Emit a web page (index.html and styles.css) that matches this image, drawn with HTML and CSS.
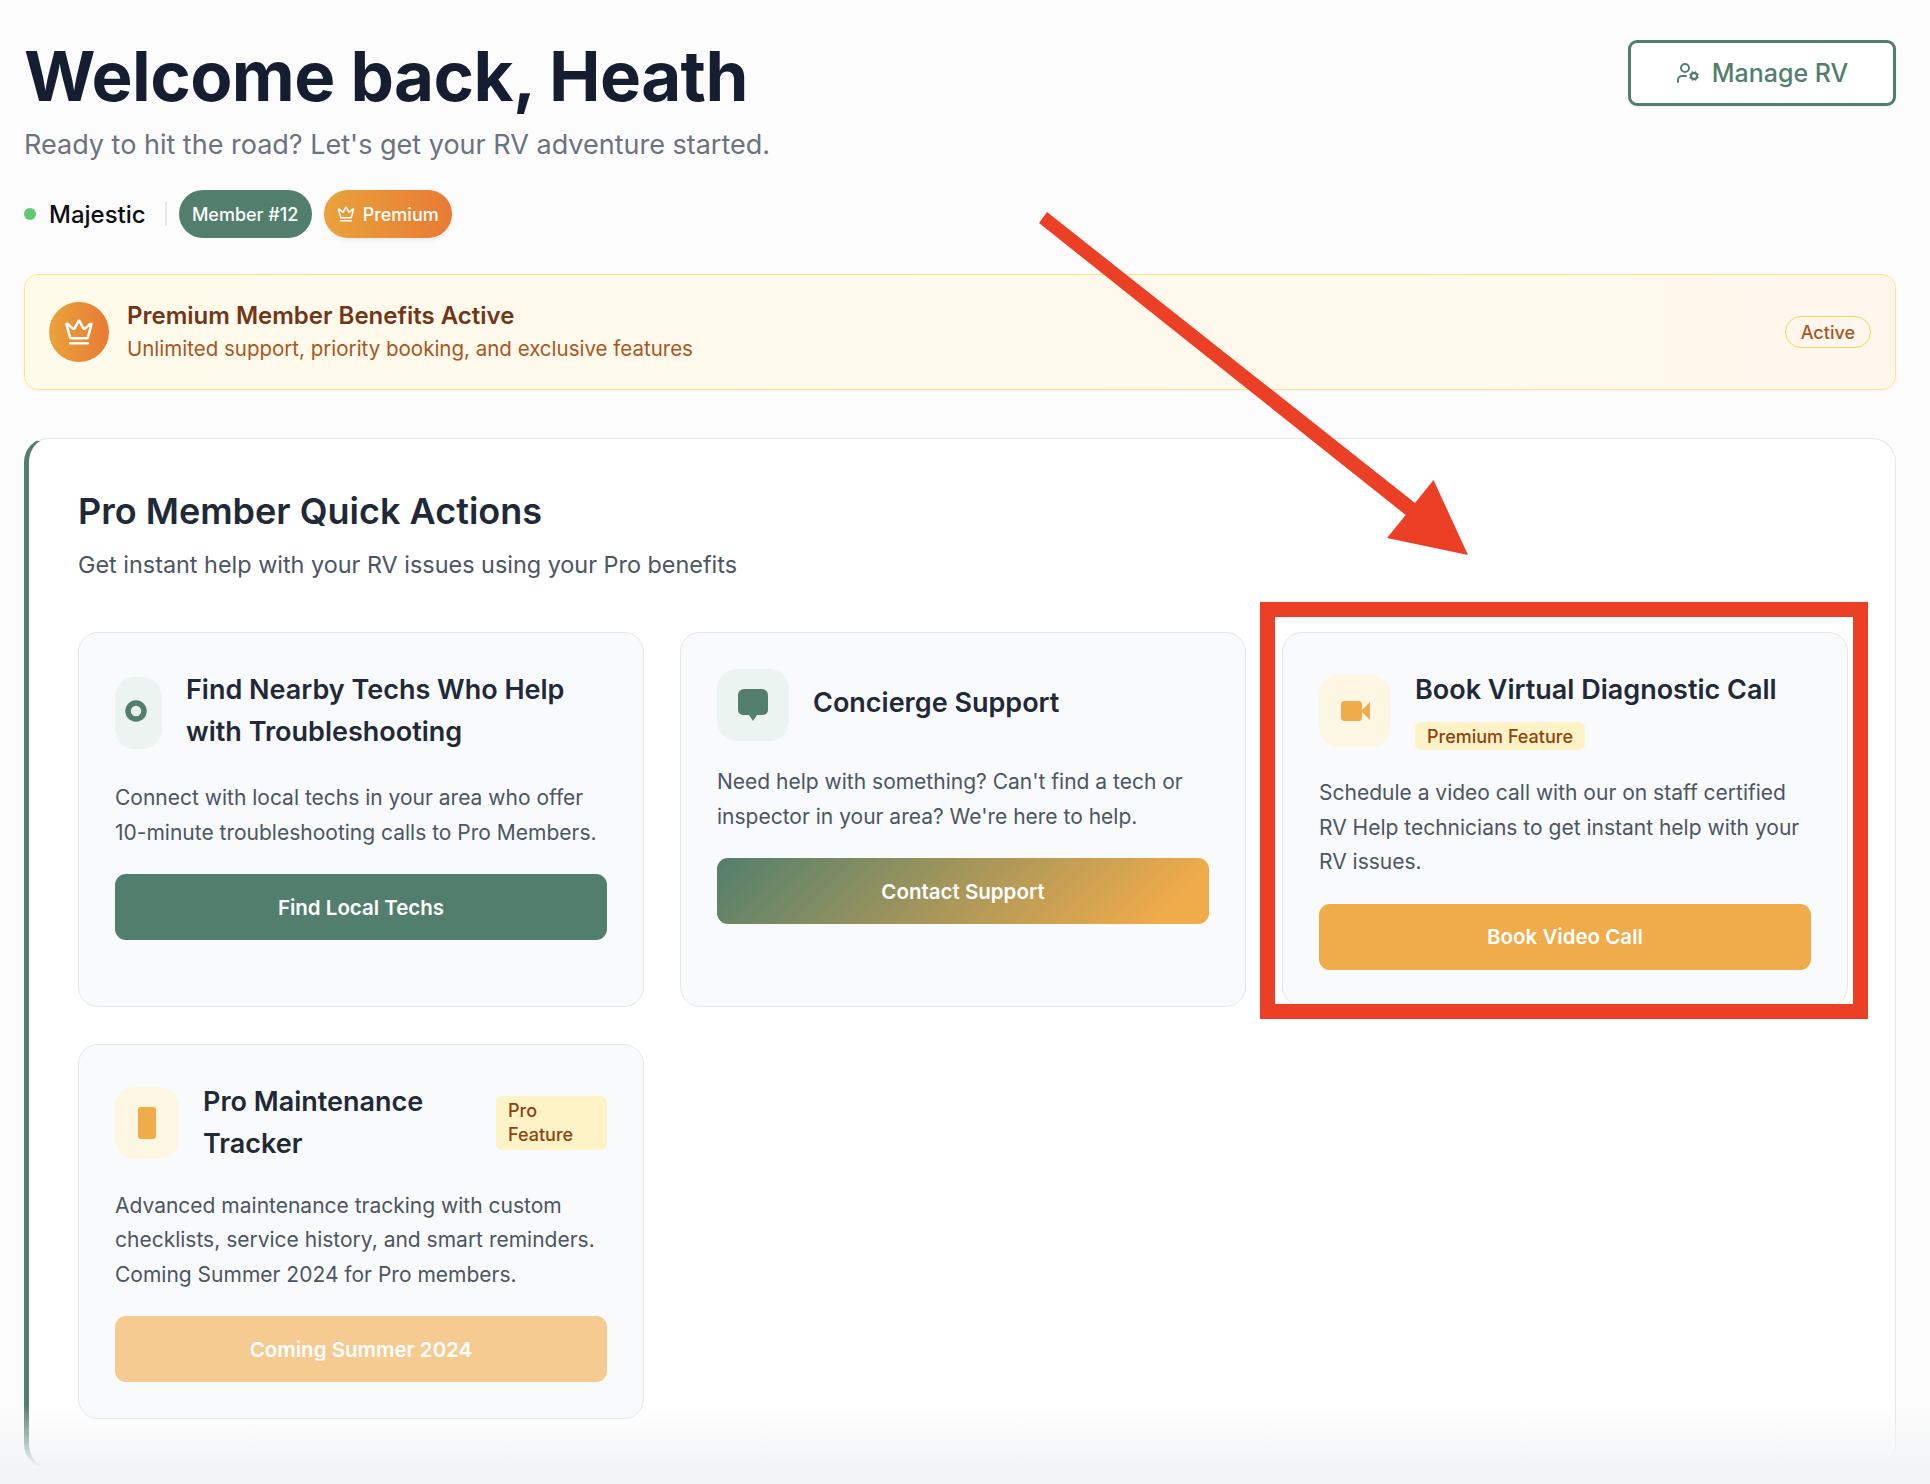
FILE: index.html
```html
<!DOCTYPE html>
<html lang="en">
<head>
<meta charset="utf-8">
<title>Dashboard</title>
<link rel="stylesheet" href="styles.css">
</head>
<body>
<main class="page">
  <header class="header">
    <div class="header-text">
      <h1 class="title">Welcome back, Heath</h1>
      <p class="subtitle">Ready to hit the road? Let's get your RV adventure started.</p>
    </div>
    <a class="manage-btn">
      <svg class="manage-icon" viewBox="0 0 24 24" fill="none" stroke="currentColor" stroke-width="2" stroke-linecap="round" stroke-linejoin="round"><circle cx="18" cy="15" r="3"/><circle cx="9" cy="7" r="4"/><path d="M10 15H6a4 4 0 0 0-4 4v2"/><path d="m21.7 16.4-.9-.3"/><path d="m15.2 13.9-.9-.3"/><path d="m16.6 18.7.3-.9"/><path d="m19.1 12.2.3-.9"/><path d="m19.6 18.7-.4-1"/><path d="m16.8 12.3-.4-1"/><path d="m14.3 16.6 1-.4"/><path d="m20.7 13.8 1-.4"/></svg>
      Manage RV
    </a>
  </header>

  <div class="status-row">
    <span class="dot"></span>
    <span class="rv-name">Majestic</span>
    <span class="divider"></span>
    <span class="pill pill-green">Member #12</span>
    <span class="pill pill-orange">
      <svg class="pill-crown" viewBox="0 0 24 24" fill="none" stroke="currentColor" stroke-width="2" stroke-linecap="round" stroke-linejoin="round"><path d="M11.562 3.266a.5.5 0 0 1 .876 0L15.39 8.87a1 1 0 0 0 1.516.294L21.183 5.5a.5.5 0 0 1 .798.519l-2.834 10.246a1 1 0 0 1-.956.734H5.81a1 1 0 0 1-.957-.734L2.02 6.02a.5.5 0 0 1 .798-.519l4.276 3.664a1 1 0 0 0 1.516-.294z"/><path d="M5 21h14"/></svg>
      Premium
    </span>
  </div>

  <section class="banner">
    <div class="banner-icon">
      <svg class="banner-crown" viewBox="0 0 24 24" fill="none" stroke="currentColor" stroke-width="2" stroke-linecap="round" stroke-linejoin="round"><path d="M11.562 3.266a.5.5 0 0 1 .876 0L15.39 8.87a1 1 0 0 0 1.516.294L21.183 5.5a.5.5 0 0 1 .798.519l-2.834 10.246a1 1 0 0 1-.956.734H5.81a1 1 0 0 1-.957-.734L2.02 6.02a.5.5 0 0 1 .798-.519l4.276 3.664a1 1 0 0 0 1.516-.294z"/><path d="M5 21h14"/></svg>
    </div>
    <div class="banner-text">
      <div class="banner-title">Premium Member Benefits Active</div>
      <div class="banner-sub">Unlimited support, priority booking, and exclusive features</div>
    </div>
    <span class="active-pill">Active</span>
  </section>

  <section class="panel">
    <h2 class="panel-title">Pro Member Quick Actions</h2>
    <p class="panel-sub">Get instant help with your RV issues using your Pro benefits</p>
    <div class="grid">

      <article class="card">
        <div class="card-head">
          <div class="icon icon-green icon-narrow">
            <svg class="ring" viewBox="0 0 22 22" fill="none" stroke="#527f6d" stroke-width="5.5"><circle cx="11" cy="11" r="8"/></svg>
          </div>
          <h3 class="card-title card-title-gap">Find Nearby Techs Who Help with Troubleshooting</h3>
        </div>
        <p class="card-desc">Connect with local techs in your area who offer 10-minute troubleshooting calls to Pro Members.</p>
        <a class="btn btn-green">Find Local Techs</a>
      </article>

      <article class="card">
        <div class="card-head">
          <div class="icon icon-green">
            <svg class="chat" viewBox="0 0 30 32" fill="#527f6d"><path d="M6 0h18a6 6 0 0 1 6 6v15a5 5 0 0 1-5 5h-6l-4 6-4-6H5a5 5 0 0 1-5-5V6a6 6 0 0 1 6-6z"/></svg>
          </div>
          <h3 class="card-title card-title-single">Concierge Support</h3>
        </div>
        <p class="card-desc">Need help with something? Can't find a tech or inspector in your area? We're here to help.</p>
        <a class="btn btn-gradient">Contact Support</a>
      </article>

      <article class="card">
        <div class="card-head card-head-video">
          <div class="icon icon-amber">
            <svg class="video" viewBox="0 0 29 20" fill="#f0ab4a"><rect width="21" height="20" rx="3.5"/><path d="M29 1v18l-8-8v-2z"/></svg>
          </div>
          <div class="title-stack">
            <h3 class="card-title">Book Virtual Diagnostic Call</h3>
            <span class="badge">Premium Feature</span>
          </div>
        </div>
        <p class="card-desc">Schedule a video call with our on staff certified RV Help technicians to get instant help with your RV issues.</p>
        <a class="btn btn-amber">Book Video Call</a>
      </article>

      <article class="card">
        <div class="card-head">
          <div class="icon icon-amber icon-mid">
            <span class="tracker"></span>
          </div>
          <h3 class="card-title card-title-grow">Pro Maintenance Tracker</h3>
          <span class="badge badge-wrap">Pro Feature</span>
        </div>
        <p class="card-desc">Advanced maintenance tracking with custom checklists, service history, and smart reminders. Coming Summer 2024 for Pro members.</p>
        <a class="btn btn-muted">Coming Summer 2024</a>
      </article>

    </div>
  </section>
</main>

<svg class="annotation" viewBox="0 0 1930 1484" fill="none">
  <polygon points="1047,212 1415,503 1433.5,480 1468,555 1387,538 1405.7,515 1039,223" fill="#eb4026"/>
  <rect x="1267.5" y="609.5" width="593" height="402" stroke="#eb4026" stroke-width="15"/>
</svg>
</body>
</html>
```
FILE: styles.css
```css
* { box-sizing: border-box; }
html, body { margin: 0; padding: 0; }
body {
  width: 1930px;
  height: 1484px;
  position: relative;
  overflow: hidden;
  background: #fcfcfc;
  font-family: Inter, "Noto Sans", sans-serif;
}
body::after {
  content: "";
  position: absolute;
  left: 0;
  right: 0;
  bottom: 0;
  height: 80px;
  background: linear-gradient(to bottom, rgba(243,244,246,0), rgba(243,244,246,1) 80%);
  pointer-events: none;
}
.page { padding: 40px 34px 0 24px; }

.header { display: flex; justify-content: space-between; align-items: flex-start; }
.title {
  margin: 0;
  font-size: 69px;
  line-height: 72px;
  font-weight: 700;
  letter-spacing: -0.6px;
  color: #151d30;
}
.subtitle {
  margin: 13px 0 0;
  font-size: 27px;
  line-height: 40px;
  color: #6b7280;
}
.manage-btn {
  width: 268px;
  height: 66px;
  display: flex;
  align-items: center;
  justify-content: center;
  gap: 12px;
  background: #fff;
  border: 3px solid #527f6d;
  border-radius: 9px;
  color: #527f6d;
  font-size: 25px;
  font-weight: 500;
  box-shadow: 0 1px 3px rgba(0,0,0,.06);
}
.manage-icon { width: 24px; height: 24px; }

.status-row { margin-top: 25px; display: flex; align-items: center; height: 48px; }
.dot { width: 12px; height: 12px; border-radius: 50%; background: #5ec96e; }
.rv-name { margin-left: 13px; font-size: 24px; font-weight: 500; color: #0d0d12; }
.divider { width: 2px; height: 24px; margin: 0 12px 0 19px; background: #e5e7eb; }
.pill {
  height: 48px;
  display: inline-flex;
  align-items: center;
  justify-content: center;
  border-radius: 24px;
  font-size: 18px;
  font-weight: 500;
  color: #fff;
}
.pill-green { width: 133px; background: #527f6d; }
.pill-orange {
  width: 128px;
  margin-left: 12px;
  gap: 8px;
  background: linear-gradient(90deg, #e9a33b, #e97a35);
  box-shadow: 0 2px 5px rgba(0,0,0,.08);
}
.pill-crown { width: 18px; height: 18px; }

.banner {
  margin-top: 36px;
  height: 116px;
  display: flex;
  align-items: center;
  padding: 0 24px;
  border: 1.5px solid #fde68a;
  border-radius: 14px;
  background: linear-gradient(90deg, #fffbeb, #fff7ed);
  box-shadow: 0 1px 3px rgba(0,0,0,.04);
}
.banner-icon {
  width: 60px;
  height: 60px;
  display: flex;
  align-items: center;
  justify-content: center;
  border-radius: 50%;
  background: linear-gradient(90deg, #e9a33b, #e97a35);
  color: #fff;
}
.banner-crown { width: 30px; height: 30px; }
.banner-text { flex: 1; margin-left: 18px; }
.banner-title { font-size: 24px; line-height: 32px; font-weight: 600; color: #713617; }
.banner-sub { margin-top: 2px; font-size: 20.5px; line-height: 30px; color: #a9561f; }
.active-pill {
  height: 32px;
  padding: 0 15px;
  display: flex;
  align-items: center;
  border: 1px solid #fcd34d;
  border-radius: 16px;
  font-size: 18px;
  font-weight: 500;
  color: #a9561f;
}

.panel {
  margin-top: 48px;
  padding: 49px 48px 48px 49px;
  background: #fff;
  border: 1px solid #e5e7eb;
  border-left: 5px solid #527f6d;
  border-radius: 24px;
}
.panel-title { margin: 0; font-size: 36px; line-height: 46px; font-weight: 600; color: #1f2937; }
.panel-sub { margin: 14px 0 50px; font-size: 23.4px; line-height: 34px; color: #4b5563; }

.grid { display: grid; grid-template-columns: repeat(3, 566px); column-gap: 36px; row-gap: 37px; }
.card {
  padding: 36px;
  background: #f9fafb;
  border: 1px solid #e5e7eb;
  border-radius: 20px;
}
.card-head { display: flex; align-items: center; gap: 24px; }
.card-head-video { height: 83px; }
.icon {
  flex: none;
  width: 72px;
  height: 72px;
  display: flex;
  align-items: center;
  justify-content: center;
  border-radius: 20px;
}
.icon-green { background: #ebf4f0; }
.icon-amber { background: #fdf6e3; }
.icon-narrow { width: 47px; justify-content: flex-start; padding-left: 10px; }
.icon-mid { width: 64px; }
.ring { width: 22px; height: 22px; margin-top: -4px; }
.chat { width: 30px; height: 32px; margin-top: -1px; }
.video { width: 29px; height: 20px; margin-top: 0; }
.tracker { width: 18px; height: 32px; border-radius: 3px; background: #f0ab4a; }

.card-title { margin: 0; font-size: 27px; line-height: 42px; font-weight: 600; color: #1f2937; }
.card-title-gap { margin-bottom: 4px; }
.card-title-single { margin-bottom: 4px; }
.card-title-grow { flex: 1; }
.title-stack { display: flex; flex-direction: column; align-items: flex-start; gap: 11px; height: 83px; }
.title-stack .card-title { height: 42px; }
.badge {
  height: 28px;
  padding: 0 12px;
  display: flex;
  align-items: center;
  border-radius: 6px;
  background: #fef3c7;
  color: #92400e;
  font-size: 18px;
  font-weight: 500;
}
.badge-wrap { flex: none; width: 111px; height: 54px; line-height: 24px; }

.card-desc { margin: 24px 0; font-size: 21px; line-height: 34.5px; color: #4b5563; }
.btn {
  display: flex;
  align-items: center;
  justify-content: center;
  height: 66px;
  border-radius: 11px;
  color: #fff;
  font-size: 20.5px;
  font-weight: 600;
}
.btn-green { background: #527f6d; }
.btn-gradient { background: linear-gradient(135deg, #527f6d, #f0ab4a 90%); }
.btn-amber { background: #f0ab4a; }
.btn-muted { background: #f5cb91; }

.annotation {
  position: absolute;
  left: 0;
  top: 0;
  width: 1930px;
  height: 1484px;
  pointer-events: none;
}
```
